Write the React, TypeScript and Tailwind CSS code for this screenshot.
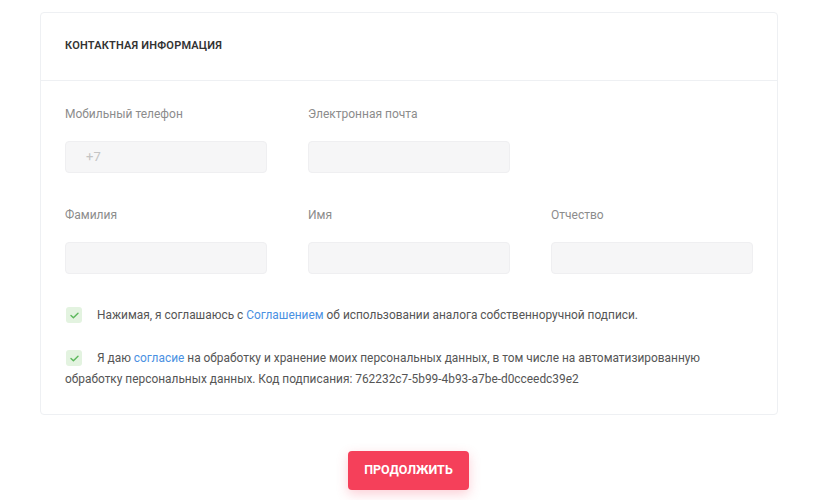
import React from "react";

function Check() {
  return (
    <span className="inline-flex w-[16px] h-[16px] rounded-[3px] bg-[#e3f3e0] items-center justify-center align-top mt-[2px] mr-[15px] ml-[1px]">
      <svg width="9" height="7" viewBox="0 0 9 7" fill="none">
        <path d="M1 3.5L3.4 5.8L8 1.2" stroke="#5cb85c" strokeWidth="1.4" strokeLinecap="round" strokeLinejoin="round" />
      </svg>
    </span>
  );
}

function Field({ label, placeholder }: { label: string; placeholder?: string }) {
  return (
    <div className="flex flex-col">
      <div className="text-[12px] leading-[16px] text-[#8c8c8c] h-[16px]">{label}</div>
      <div className="mt-[19px] h-[32px] rounded-[4px] bg-[#f6f6f7] border border-[#efeff1] flex items-center px-[20px] text-[13px] text-[#c4c4c4]">
        {placeholder}
      </div>
    </div>
  );
}

export default function App() {
  return (
    <div className="min-h-[500px] bg-white pt-[12px] font-['Roboto',sans-serif]">
      <div className="ml-[40px] w-[738px] border border-[#eef0f3] rounded-[4px] bg-white">
        <div className="h-[68px] flex items-center px-[24px] border-b border-[#eef0f3]">
          <span className="text-[11px] font-semibold text-[#333] uppercase tracking-[0.2px]">Контактная информация</span>
        </div>
        <div className="px-[24px] pt-[25px] pb-[24px]">
          <div className="grid grid-cols-[202px_202px_202px] gap-x-[41px]">
            <Field label="Мобильный телефон" placeholder="+7" />
            <Field label="Электронная почта" />
            <div />
          </div>
          <div className="grid grid-cols-[202px_202px_202px] gap-x-[41px] mt-[34px]">
            <Field label="Фамилия" />
            <Field label="Имя" />
            <Field label="Отчество" />
          </div>
          <div className="mt-[31px] text-[11.9px] leading-[21px] text-[#555]">
            <p>
              <Check />
              Нажимая, я соглашаюсь с <span className="text-[#4a90e2]">Соглашением</span> об использовании аналога собственноручной подписи.
            </p>
            <p className="mt-[22px]">
              <Check />
              Я даю <span className="text-[#4a90e2]">согласие</span> на обработку и хранение моих персональных данных, в том числе на автоматизированную обработку персональных данных. Код подписания: 762232c7-5b99-4b93-a7be-d0cceedc39e2
            </p>
          </div>
        </div>
      </div>
      <div className="flex justify-center mt-[36px]">
        <button className="ml-[-8px] w-[121px] h-[39px] rounded-[4px] bg-[#f5405a] text-white text-[12.5px] font-bold uppercase shadow-[0_4px_12px_rgba(245,64,90,0.25)]">
          Продолжить
        </button>
      </div>
    </div>
  );
}
